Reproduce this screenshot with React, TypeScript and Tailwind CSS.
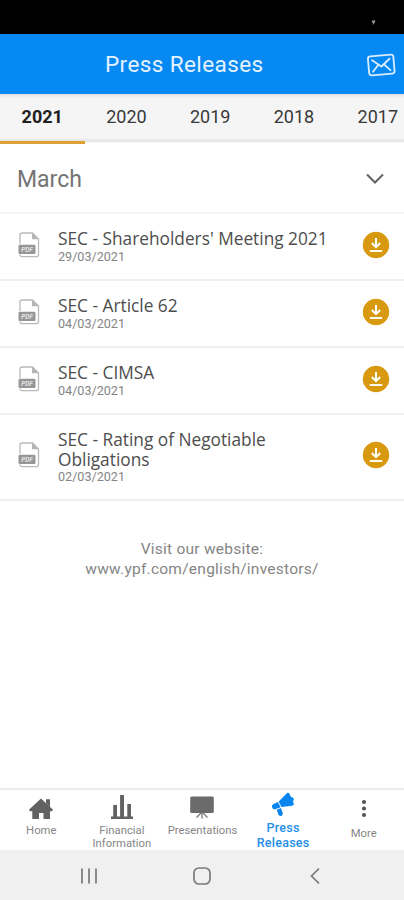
import React from "react";

const years = ["2021", "2020", "2019", "2018", "2017"];

const releases = [
  { title: "SEC - Shareholders' Meeting 2021", date: "29/03/2021", height: "h-[67px]" },
  { title: "SEC - Article 62", date: "04/03/2021", height: "h-[67px]" },
  { title: "SEC - CIMSA", date: "04/03/2021", height: "h-[67px]" },
  { title: "SEC - Rating of Negotiable Obligations", date: "02/03/2021", height: "h-[86px]" },
];

function MailIcon() {
  return (
    <svg width="30" height="26" viewBox="0 0 30 26" fill="none" stroke="#d9edff" strokeWidth="1.8" strokeLinejoin="round" strokeLinecap="round">
      <g transform="rotate(-5 15 13)">
        <rect x="2.5" y="3.5" width="25.5" height="19" rx="2.5" />
        <path d="M6.500 7.500l8.700 7L24 7.500M6.500 19l6-6.500M24 19l-6.200-6.500" />
      </g>
    </svg>
  );
}

function PdfIcon() {
  return (
    <svg width="22" height="26" viewBox="0 0 22 26" fill="none">
      <path d="M2 12V3.200Q2 1 4.200 1H14.500L20.500 7V22.500Q20.500 24.700 18.300 24.700H4.200Q2 24.700 2 22.500" stroke="#b9b9b9" strokeWidth="1.300" />
      <path d="M14 1V7.300H20.500Z" fill="#b5b5b5" />
      <rect x="0.500" y="12.800" width="17" height="9.200" rx="1.200" fill="#969696" />
      <text x="9" y="19.800" textAnchor="middle" fontSize="6.500" fontWeight="700" fontStyle="italic" fontFamily="Roboto, sans-serif" fill="#e2e2e2">PDF</text>
    </svg>
  );
}

function DownloadIcon() {
  return (
    <svg width="28" height="28" viewBox="0 0 28 28" fill="none">
      <circle cx="14" cy="14" r="13.200" fill="#d8990f" />
      <path d="M14 7V15.500M9.800 12L14 16.200L18.200 12" stroke="#fff" strokeWidth="2" />
      <path d="M7.800 20H20.200" stroke="#fff" strokeWidth="1.900" />
    </svg>
  );
}

function HomeIcon() {
  return (
    <svg width="26" height="28" viewBox="0 0 26 28" fill="#626262">
      <path d="M13 4.500L25 15.800L24 17.200H22V25H15.500V19H11V25H4.300V17.200H2L1 15.800L6 11.100L13 4.500ZM18 5.300H22V13L18 9Z" />
    </svg>
  );
}

function ChartIcon() {
  return (
    <svg width="24" height="28" viewBox="0 0 24 28" fill="#626262">
      <path d="M3.200 11H7V24H3.200ZM10.100 1H14V24H10.100ZM17.300 10H21V24H17.300ZM1 22.500H23V25H1Z" />
    </svg>
  );
}

function PresentationIcon() {
  return (
    <svg width="26" height="28" viewBox="0 0 26 28">
      <rect x="1.200" y="2.500" width="23.600" height="16.500" rx="1.500" fill="#6b6b6b" />
      <path d="M13 18.500V24.500M12 19L7.500 23.500M14 19L18.500 23.500" stroke="#777" strokeWidth="1.300" />
    </svg>
  );
}

function MegaphoneIcon() {
  return (
    <svg width="26" height="28" viewBox="0 0 26 28" fill="#0785ee">
      <path d="M8.700 9.600L17.300 0.800Q18.800 0.300 19.600 2L21 5Q23.300 5 23.800 7Q24 8.200 22.800 9.200L23.800 11.500Q24.200 13.500 22.200 13.700L11.500 15Z" />
      <path d="M7.900 10L3.500 11.900Q1.300 13.100 2 15.300Q2.900 17.800 5.100 17.300L10.600 15.300Z" />
      <path d="M6.800 17.700L10.900 16.100L12.700 21.100Q13.100 23.500 11.100 24Q8.900 24.500 8.200 22Z" />
    </svg>
  );
}

export default function App() {
  return (
    <div className="flex h-[900px] w-[404px] flex-col overflow-hidden bg-white font-['Roboto',sans-serif]">
      <div className="flex h-[34px] shrink-0 justify-end bg-black pr-[28px] pt-[20px]">
        <svg width="5" height="5" viewBox="0 0 5 5"><path d="M1 0.500H4.500L3.500 3L1.500 5L2 2.500H1Z" fill="#999" /></svg>
      </div>
      <header className="flex h-[60px] shrink-0 items-center justify-between bg-[#0789f4] pl-[105px] pr-[8px]">
        <h1 className="whitespace-nowrap text-[22.5px] leading-7 tracking-[0.4px] text-[#e4f3ff]">Press Releases</h1>
        <div className="pt-px"><MailIcon /></div>
      </header>
      <nav className="flex h-[50px] shrink-0 bg-[linear-gradient(#dedede,#f5f5f5_4px,#f5f5f5_44px,#e2e2e2_47px,#fff_49px)]">
        {years.map((year, i) => (
          <button
            key={year}
            className={
              i === 0
                ? "h-[50px] w-[84.5px] shrink-0 border-b-[3px] border-[#dca034] pb-[2px] text-[18px] font-bold text-[#202020]"
                : "h-[45px] w-[83.8px] shrink-0 text-[18px] text-[#393939]"
            }
          >
            {year}
          </button>
        ))}
      </nav>
      <main className="flex min-h-0 flex-1 flex-col">
        <div className="flex h-[70px] shrink-0 items-center justify-between border-b-2 border-[#f4f4f4] pl-[17px] pr-[20px]">
          <h2 className="pt-[3px] text-[23px] leading-7 text-[#747474]">March</h2>
          <svg className="mt-[2px]" width="18" height="12" viewBox="0 0 18 12" fill="none" stroke="#646464" strokeWidth="2.1"><path d="M1 1.500L9 9.500L17 1.500" /></svg>
        </div>
        {releases.map((item) => (
          <div key={item.title} className={`flex shrink-0 items-center border-b-2 border-[#efefef] pl-[18px] pr-[14px] ${item.height}`}>
            <div className="pb-[4px]"><PdfIcon /></div>
            <div className="ml-[18px] flex-1">
              <p className="max-w-[285px] font-['Open_Sans',sans-serif] text-[17.3px] leading-[19.5px] text-[#4d4d4d]">{item.title}</p>
              <p className="text-[12.6px] leading-[15px] text-[#858585]">{item.date}</p>
            </div>
            <div className="pb-[4px]"><DownloadIcon /></div>
          </div>
        ))}
        <div className="pt-[38px] text-center text-[15.5px] leading-[20px] tracking-[0.25px] text-[#858585]">
          <p>Visit our website:</p>
          <p>www.ypf.com/english/investors/</p>
        </div>
      </main>
      <nav className="grid h-[62px] shrink-0 grid-cols-5 border-t-2 border-[#ececec] pl-px text-center text-[11.3px] leading-[13px] text-[#868686]">
        <div className="flex flex-col items-center pt-[4px]"><HomeIcon /><span className="mt-[2px]">Home</span></div>
        <div className="flex flex-col items-center pt-[4px]"><ChartIcon /><span className="mt-[2px]">Financial<br />Information</span></div>
        <div className="flex flex-col items-center pt-[4px]"><PresentationIcon /><span className="mt-[2px]">Presentations</span></div>
        <div className="flex flex-col items-center pt-[2px] text-[12.5px] font-medium leading-[15px] text-[#248fe8]"><MegaphoneIcon /><span className="tracking-[0.25px]">Press<br />Releases</span></div>
        <div className="flex flex-col items-center pt-[8px]">
          <svg width="6" height="22" viewBox="0 0 6 22" fill="#555"><circle cx="3" cy="4" r="2.1" /><circle cx="3" cy="10.500" r="2.1" /><circle cx="3" cy="17" r="2.1" /></svg>
          <span className="mt-[7px]">More</span>
        </div>
      </nav>
      <footer className="flex h-[50px] shrink-0 items-center justify-between bg-[#f0f0f0] pl-[80px] pr-[83px] pt-px">
        <svg width="18" height="18" viewBox="0 0 18 18" stroke="#797979" strokeWidth="1.700"><path d="M2 1.500V16.500M9 1.500V16.500M16 1.500V16.500" /></svg>
        <svg className="mr-1" width="20" height="20" viewBox="0 0 20 20" fill="none" stroke="#797979" strokeWidth="1.700"><rect x="2" y="2" width="16" height="16" rx="5" /></svg>
        <svg width="12" height="18" viewBox="0 0 12 18" fill="none" stroke="#797979" strokeWidth="1.700"><path d="M10 1.500L2.500 9L10 16.500" /></svg>
      </footer>
    </div>
  );
}
